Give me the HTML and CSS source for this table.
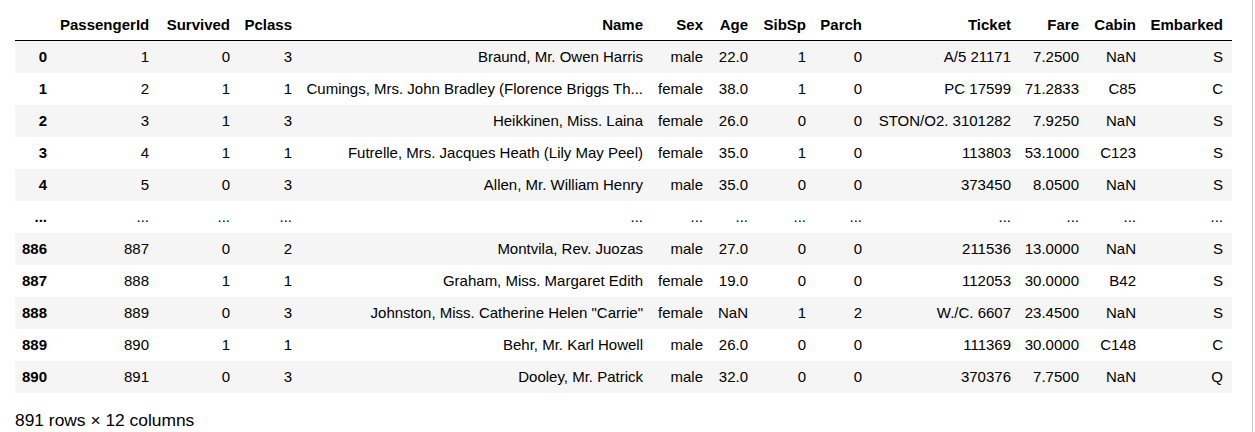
FILE: index.html
```html
<!DOCTYPE html>
<html>
<head>
<meta charset="utf-8">
<link rel="stylesheet" href="styles.css">
</head>
<body>
<div class="cell">
  <table class="df">
    <colgroup>
      <col class="w-idx"><col class="w-pid"><col class="w-surv"><col class="w-pcl"><col class="w-name"><col class="w-sex"><col class="w-age"><col class="w-sib"><col class="w-par"><col class="w-tic"><col class="w-fare"><col class="w-cab"><col class="w-emb">
    </colgroup>
    <thead>
      <tr><th></th><th>PassengerId</th><th>Survived</th><th>Pclass</th><th>Name</th><th>Sex</th><th>Age</th><th>SibSp</th><th>Parch</th><th>Ticket</th><th>Fare</th><th>Cabin</th><th>Embarked</th></tr>
    </thead>
    <tbody>
      <tr><th>0</th><td>1</td><td>0</td><td>3</td><td>Braund, Mr. Owen Harris</td><td>male</td><td>22.0</td><td>1</td><td>0</td><td>A/5 21171</td><td>7.2500</td><td>NaN</td><td>S</td></tr>
      <tr><th>1</th><td>2</td><td>1</td><td>1</td><td>Cumings, Mrs. John Bradley (Florence Briggs Th...</td><td>female</td><td>38.0</td><td>1</td><td>0</td><td>PC 17599</td><td>71.2833</td><td>C85</td><td>C</td></tr>
      <tr><th>2</th><td>3</td><td>1</td><td>3</td><td>Heikkinen, Miss. Laina</td><td>female</td><td>26.0</td><td>0</td><td>0</td><td>STON/O2. 3101282</td><td>7.9250</td><td>NaN</td><td>S</td></tr>
      <tr><th>3</th><td>4</td><td>1</td><td>1</td><td>Futrelle, Mrs. Jacques Heath (Lily May Peel)</td><td>female</td><td>35.0</td><td>1</td><td>0</td><td>113803</td><td>53.1000</td><td>C123</td><td>S</td></tr>
      <tr><th>4</th><td>5</td><td>0</td><td>3</td><td>Allen, Mr. William Henry</td><td>male</td><td>35.0</td><td>0</td><td>0</td><td>373450</td><td>8.0500</td><td>NaN</td><td>S</td></tr>
      <tr><th>...</th><td>...</td><td>...</td><td>...</td><td>...</td><td>...</td><td>...</td><td>...</td><td>...</td><td>...</td><td>...</td><td>...</td><td>...</td></tr>
      <tr><th>886</th><td>887</td><td>0</td><td>2</td><td>Montvila, Rev. Juozas</td><td>male</td><td>27.0</td><td>0</td><td>0</td><td>211536</td><td>13.0000</td><td>NaN</td><td>S</td></tr>
      <tr><th>887</th><td>888</td><td>1</td><td>1</td><td>Graham, Miss. Margaret Edith</td><td>female</td><td>19.0</td><td>0</td><td>0</td><td>112053</td><td>30.0000</td><td>B42</td><td>S</td></tr>
      <tr><th>888</th><td>889</td><td>0</td><td>3</td><td>Johnston, Miss. Catherine Helen "Carrie"</td><td>female</td><td>NaN</td><td>1</td><td>2</td><td>W./C. 6607</td><td>23.4500</td><td>NaN</td><td>S</td></tr>
      <tr><th>889</th><td>890</td><td>1</td><td>1</td><td>Behr, Mr. Karl Howell</td><td>male</td><td>26.0</td><td>0</td><td>0</td><td>111369</td><td>30.0000</td><td>C148</td><td>C</td></tr>
      <tr><th>890</th><td>891</td><td>0</td><td>3</td><td>Dooley, Mr. Patrick</td><td>male</td><td>32.0</td><td>0</td><td>0</td><td>370376</td><td>7.7500</td><td>NaN</td><td>Q</td></tr>
    </tbody>
  </table>
  <p class="shape">891 rows × 12 columns</p>
</div>
</body>
</html>
```
FILE: styles.css
```css
html, body {
  margin: 0;
  padding: 0;
  background: #fff;
}
.cell {
  box-sizing: border-box;
  width: 1253px;
  height: 432px;
  border-right: 1px solid #c8c8c8;
  padding: 8px 0 0 15px;
  font-family: "Liberation Sans", Arial, sans-serif;
  color: #000;
}
.df {
  table-layout: fixed;
  border-collapse: collapse;
  border: none;
  width: 1217px;
  font-size: 15px;
}
.w-idx { width: 41px; }
.w-pid { width: 102px; }
.w-surv { width: 81px; }
.w-pcl { width: 62px; }
.w-name { width: 351px; }
.w-sex { width: 60px; }
.w-age { width: 45px; }
.w-sib { width: 58px; }
.w-par { width: 56px; }
.w-tic { width: 149px; }
.w-fare { width: 68px; }
.w-cab { width: 57px; }
.w-emb { width: 87px; }
.df th, .df td {
  text-align: right;
  white-space: nowrap;
  line-height: 17px;
  padding: 7px 9px 8px 4px;
  border: none;
}
.df th {
  font-weight: bold;
}
.df thead th {
  padding-top: 8px;
  padding-bottom: 7px;
  vertical-align: bottom;
  border-bottom: 1px solid #000;
}
.df tbody tr:nth-child(odd) {
  background: #f5f5f5;
}
.shape {
  margin: 17px 0 0 0;
  font-size: 17.4px;
  line-height: 20px;
}
```
